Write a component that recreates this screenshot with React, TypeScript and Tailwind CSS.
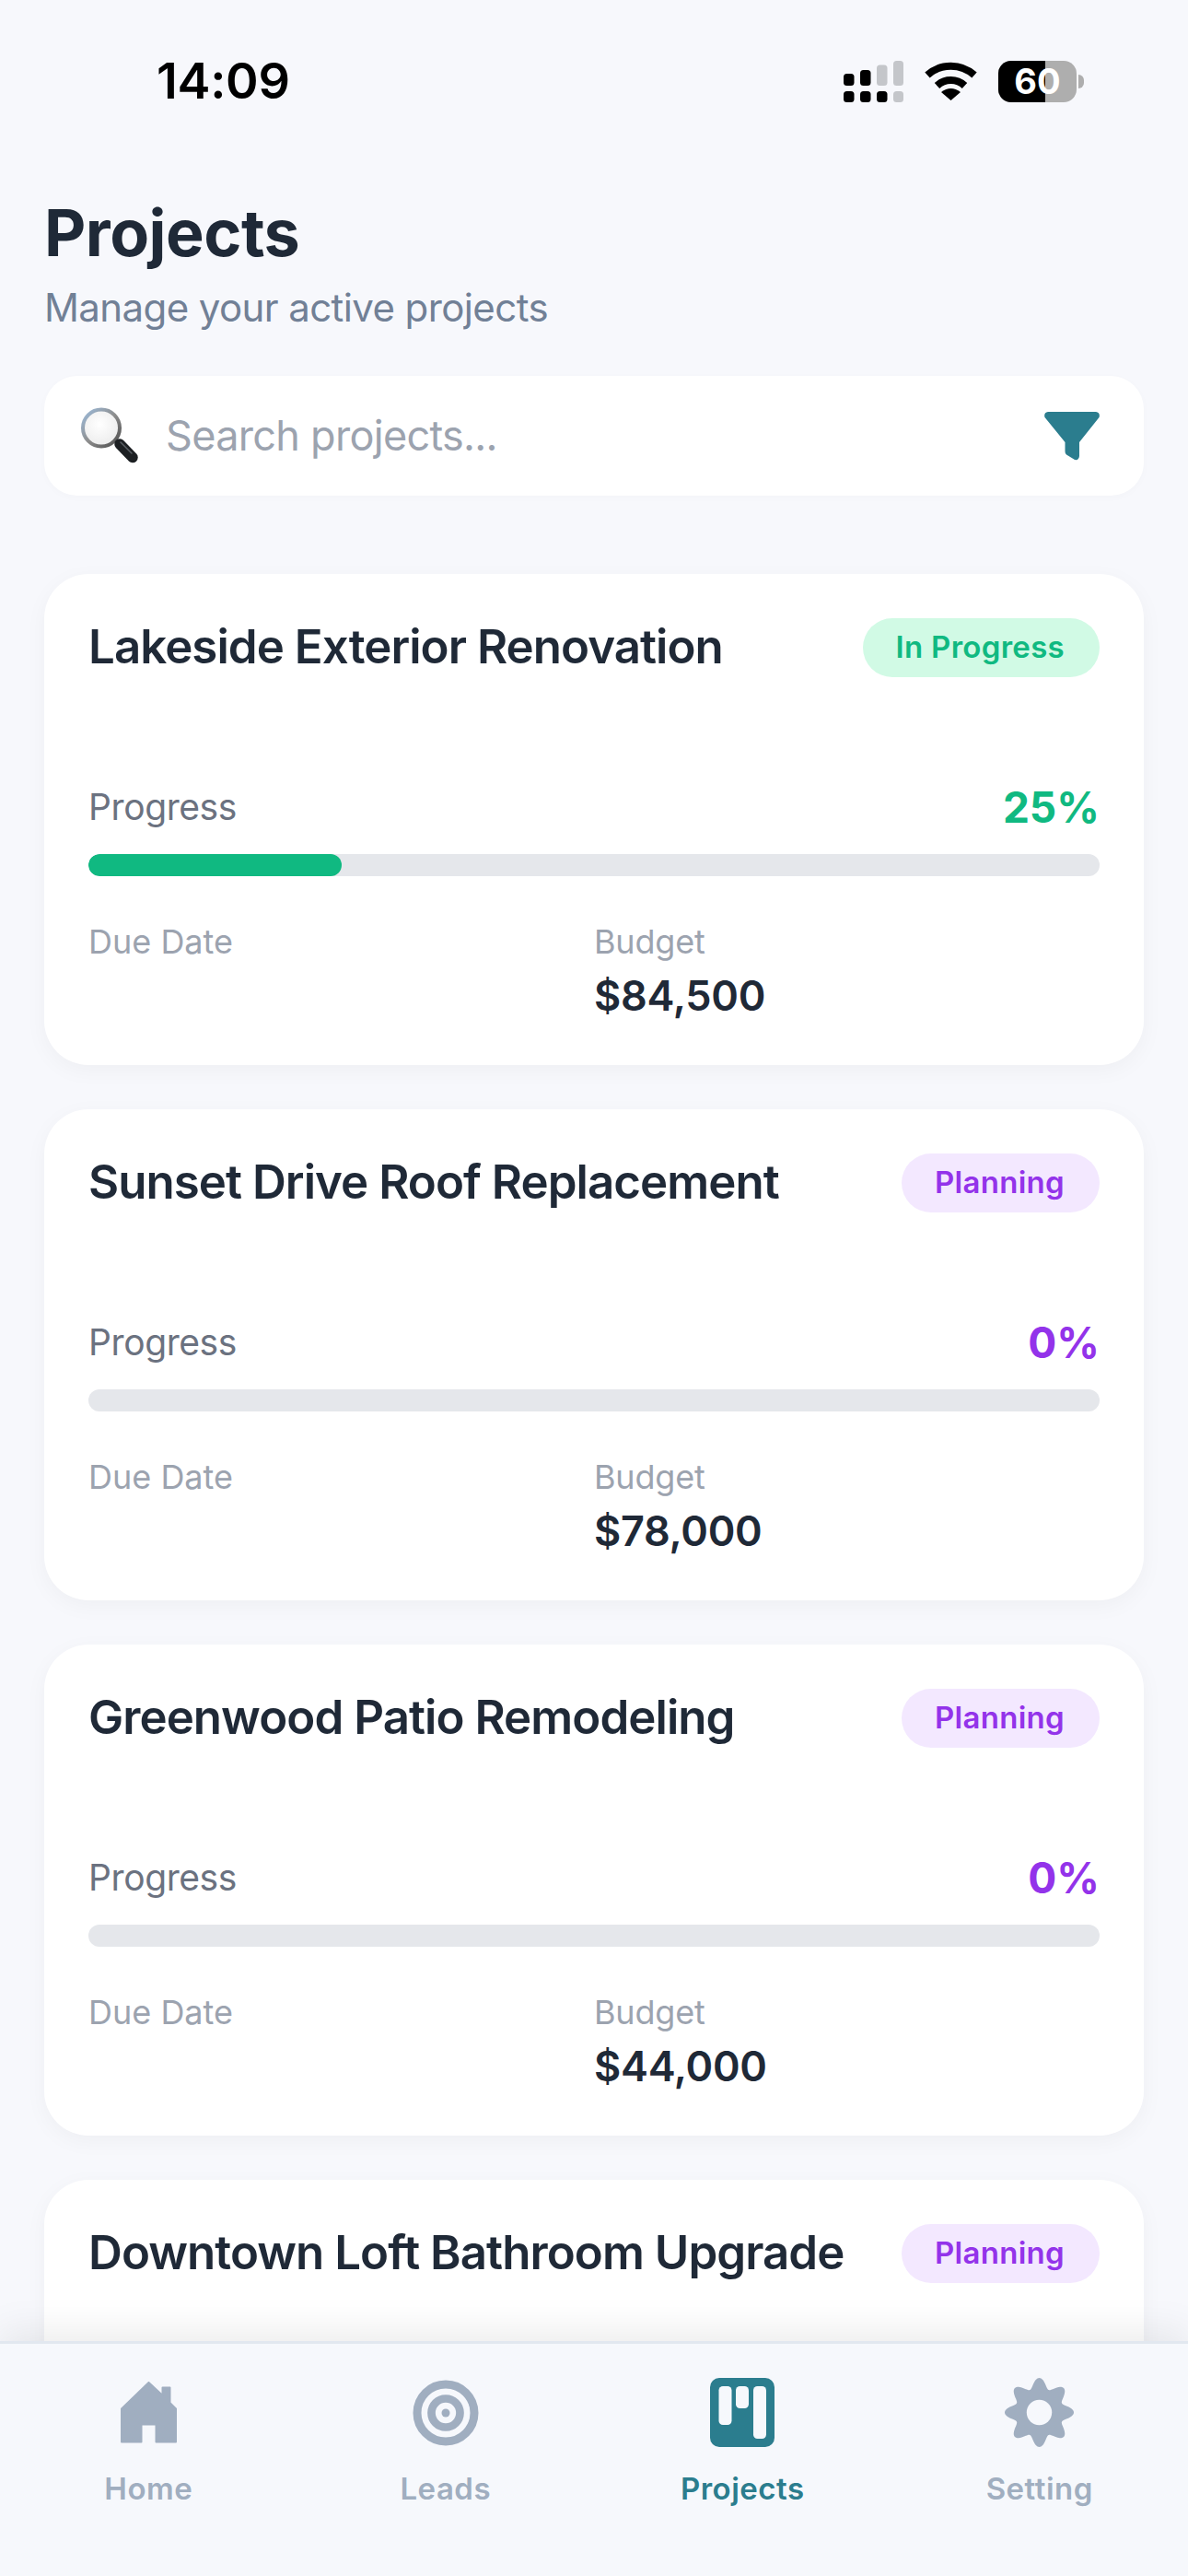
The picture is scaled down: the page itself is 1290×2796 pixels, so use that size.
import React from 'react';

interface Project {
  title: string;
  status: 'In Progress' | 'Planning';
  progress: number;
  budget: string;
}

const projects: Project[] = [
  { title: 'Lakeside Exterior Renovation', status: 'In Progress', progress: 25, budget: '$84,500' },
  { title: 'Sunset Drive Roof Replacement', status: 'Planning', progress: 0, budget: '$78,000' },
  { title: 'Greenwood Patio Remodeling', status: 'Planning', progress: 0, budget: '$44,000' },
  { title: 'Downtown Loft Bathroom Upgrade', status: 'Planning', progress: 0, budget: '$62,000' },
];

// Lobed outline for the settings gear
const gearPath = (() => {
  const points: string[] = [];
  for (let i = 0; i < 240; i++) {
    const a = (i / 240) * Math.PI * 2 - Math.PI / 2;
    const r = 32 + 5.5 * Math.cos(8 * (a + Math.PI / 2));
    points.push(`${(37.5 + r * Math.cos(a)).toFixed(2)} ${(37.5 + r * Math.sin(a)).toFixed(2)}`);
  }
  return `M${points.join('L')}Z`;
})();

const SignalIcon = () => (
  <svg width="65" height="45" viewBox="0 0 65 45">
    <rect x="0" y="14" width="11.5" height="13" rx="3.5" fill="#000" />
    <rect x="18" y="10" width="11.5" height="17" rx="3.5" fill="#000" />
    <rect x="36" y="4.5" width="11.5" height="22.5" rx="3.5" fill="#c4c6ca" />
    <rect x="54" y="0" width="11" height="27" rx="3.5" fill="#c4c6ca" />
    <rect x="0" y="33" width="11.5" height="12" rx="3.5" fill="#000" />
    <rect x="18" y="33" width="11.5" height="12" rx="3.5" fill="#000" />
    <rect x="36" y="33" width="11.5" height="12" rx="3.5" fill="#000" />
    <rect x="54" y="33" width="11" height="12" rx="3.5" fill="#c4c6ca" />
  </svg>
);

const WifiIcon = () => (
  <svg width="57" height="42" viewBox="0 0 57 42" fill="none">
    <path d="M3 14.5A38 38 0 0 1 54 14.5" stroke="#000" strokeWidth="8" />
    <path d="M13.5 26A22 22 0 0 1 43.5 26" stroke="#000" strokeWidth="8" />
    <path d="M28.5 42L18 33Q28.5 25 39 33Z" fill="#000" />
  </svg>
);

const SearchEmoji = () => (
  <svg width="63" height="62" viewBox="0 0 63 62">
    <defs>
      <radialGradient id="lens" cx="0.45" cy="0.4" r="0.6">
        <stop offset="0" stopColor="#ffffff" />
        <stop offset="1" stopColor="#ececec" />
      </radialGradient>
      <linearGradient id="ring" x1="0" y1="0" x2="1" y2="1">
        <stop offset="0" stopColor="#9dbcdc" />
        <stop offset="0.5" stopColor="#8e8e8e" />
        <stop offset="1" stopColor="#4a4a4a" />
      </linearGradient>
    </defs>
    <circle cx="23" cy="22.5" r="20" fill="url(#lens)" stroke="url(#ring)" strokeWidth="4" />
    <path d="M43 40L57 54.5" stroke="#1c1f22" strokeWidth="11.5" strokeLinecap="round" />
    <path d="M44 38L56 50" stroke="#5b6066" strokeWidth="1.5" strokeLinecap="round" />
  </svg>
);

const FilterIcon = () => (
  <svg width="60" height="53" viewBox="0 0 60 53" className="fill-[#2b7d8e]">
    <path d="M4 0H56Q61 1 59.5 6L38 33V48Q37.5 53 33 52L24 46.5Q22.5 45.5 22.5 43V33L.5 6Q-1 1 4 0Z" />
  </svg>
);

const HomeIcon = () => (
  <svg width="61" height="67" viewBox="0 0 61 67" className="fill-[#a0aec0]">
    <path
      d="M30.5 1L45.5 15V6.5H53.5V23L60 29.5V65.5H38.5V46.5H22.5V65.5H1V29.5Z"
      className="stroke-[#a0aec0]"
      strokeWidth="2"
      strokeLinejoin="round"
    />
  </svg>
);

const TargetIcon = () => (
  <svg width="72" height="72" viewBox="0 0 72 72" fill="none" className="stroke-[#a0aec0]">
    <circle cx="36" cy="36" r="31" strokeWidth="9" />
    <circle cx="36" cy="36" r="15.5" strokeWidth="8.7" />
    <circle cx="36" cy="36" r="4.5" className="fill-[#a0aec0] stroke-none" />
  </svg>
);

const BoardIcon = () => (
  <svg width="70" height="75" viewBox="0 0 70 75">
    <rect width="70" height="75" rx="10" fill="#2b7d8e" />
    <rect x="9.5" y="9" width="14" height="42" rx="4.5" fill="#f6f8fc" />
    <rect x="28" y="9" width="14" height="24" rx="4.5" fill="#f6f8fc" />
    <rect x="47" y="9" width="14" height="57" rx="4.5" fill="#f6f8fc" />
  </svg>
);

const GearIcon = () => (
  <svg width="75" height="75" viewBox="0 0 75 75" className="fill-[#a0aec0]">
    <path d={gearPath} fillRule="evenodd" />
    <circle cx="37.5" cy="37.5" r="13.7" fill="#f6f8fc" />
  </svg>
);

const ProjectCard: React.FC<{ project: Project }> = ({ project }) => {
  const inProgress = project.status === 'In Progress';

  return (
    <div className="h-[533px] shrink-0 rounded-[48px] bg-white px-12 pt-12 shadow-[0_6px_24px_rgba(0,0,0,0.04)]">
      <div className="flex h-16 items-center justify-between">
        <h2 className="pb-[3px] text-[51px] leading-[61px] font-semibold tracking-[-0.95px] text-[#1f2937]">{project.title}</h2>
        <span
          className={`flex h-16 items-center rounded-[32px] pr-[38px] pl-9 text-[33px] font-semibold tracking-[0.3px] ${
            inProgress ? 'bg-[#d1fae5] text-[#10b981]' : 'bg-[#f3e8ff] text-[#9333ea]'
          }`}
        >
          {project.status}
        </span>
      </div>

      <div className="mt-[113px] flex items-center justify-between">
        <span className="text-[39px] leading-[56px] tracking-[-0.4px] text-[#6b7280]">Progress</span>
        <span className={`text-[46px] leading-[56px] font-bold ${inProgress ? 'text-[#10b981]' : 'text-[#9333ea]'}`}>
          {project.progress}%
        </span>
      </div>

      <div className="mt-[23px] h-6 overflow-hidden rounded-xl bg-[#e5e7eb]">
        <div className="h-full rounded-xl bg-[#10b981]" style={{ width: `${project.progress}%` }} />
      </div>

      <div className="mt-[47px] grid grid-cols-2">
        <span className="text-[36px] leading-[48px] text-[#9ca3af]">Due Date</span>
        <div className="flex flex-col">
          <span className="text-[36px] leading-[48px] tracking-[-0.2px] text-[#9ca3af]">Budget</span>
          <span className="mt-[5px] text-[45px] leading-[60px] font-semibold tracking-[-0.3px] text-[#1f2937]">{project.budget}</span>
        </div>
      </div>
    </div>
  );
};

const NavItem: React.FC<{ label: string; active?: boolean; children: React.ReactNode }> = ({ label, active, children }) => (
  <div className="flex flex-col items-center">
    <div className="flex h-[75px] items-center justify-center">{children}</div>
    <span className={`mt-[23px] text-[33px] leading-[44px] font-semibold tracking-[0.5px] ${active ? 'text-[#2b7d8e]' : 'text-[#a0aec0]'}`}>
      {label}
    </span>
  </div>
);

export default function App() {
  return (
    <div className="flex h-[2796px] w-[1290px] flex-col overflow-hidden bg-[#f7f8fc] [font-family:Inter,'Noto_Sans',sans-serif]">
      {/* Status bar */}
      <div className="flex h-[176px] shrink-0 items-center justify-between pr-[113px] pl-[170px]">
        <span className="text-[54px] leading-[64px] font-semibold tracking-[-0.3px] text-black">14:09</span>
        <div className="flex items-center gap-[23px]">
          <SignalIcon />
          <WifiIcon />
          <div className="flex items-center gap-[2px]">
            <div className="relative flex h-[45px] w-[85px] items-center justify-center rounded-[14px] bg-[#aeaeae]">
              <div className="absolute inset-y-0 left-0 w-[51px] rounded-l-[14px] bg-black" />
              <span className="relative text-[38px] leading-[45px] font-bold text-white">60</span>
            </div>
            <div className="h-[15px] w-[6px] rounded-r-full bg-[#aeaeae]" />
          </div>
        </div>
      </div>

      {/* Scrolling content */}
      <div className="min-h-0 flex-1 overflow-hidden px-12 pt-8">
        <h1 className="text-[70px] leading-[90px] font-bold tracking-[-0.5px] text-[#1f2937]">Projects</h1>
        <p className="mt-2 text-[42px] leading-[56px] tracking-[-0.6px] text-[#718096]">Manage your active projects</p>

        <div className="mt-[46px] flex h-[130px] items-center justify-between rounded-[36px] bg-white pr-12 pl-[39px] shadow-[0_2px_10px_rgba(0,0,0,0.02)]">
          <div className="flex items-center gap-[30px]">
            <SearchEmoji />
            <span className="text-[45px] tracking-[-0.7px] text-[#9ca3af]">Search projects...</span>
          </div>
          <FilterIcon />
        </div>

        <div className="mt-[85px] flex flex-col gap-12">
          {projects.map((project) => (
            <ProjectCard key={project.title} project={project} />
          ))}
        </div>
      </div>

      {/* Bottom tabs */}
      <div className="relative z-10 grid h-[255px] shrink-0 grid-cols-4 border-t-[3px] border-[#e2e8f0] bg-[#f6f8fc] pt-[37px] shadow-[0_-10px_40px_rgba(0,0,0,0.08)]">
        <NavItem label="Home"><HomeIcon /></NavItem>
        <NavItem label="Leads"><TargetIcon /></NavItem>
        <NavItem label="Projects" active><BoardIcon /></NavItem>
        <NavItem label="Setting"><GearIcon /></NavItem>
      </div>
    </div>
  );
}
